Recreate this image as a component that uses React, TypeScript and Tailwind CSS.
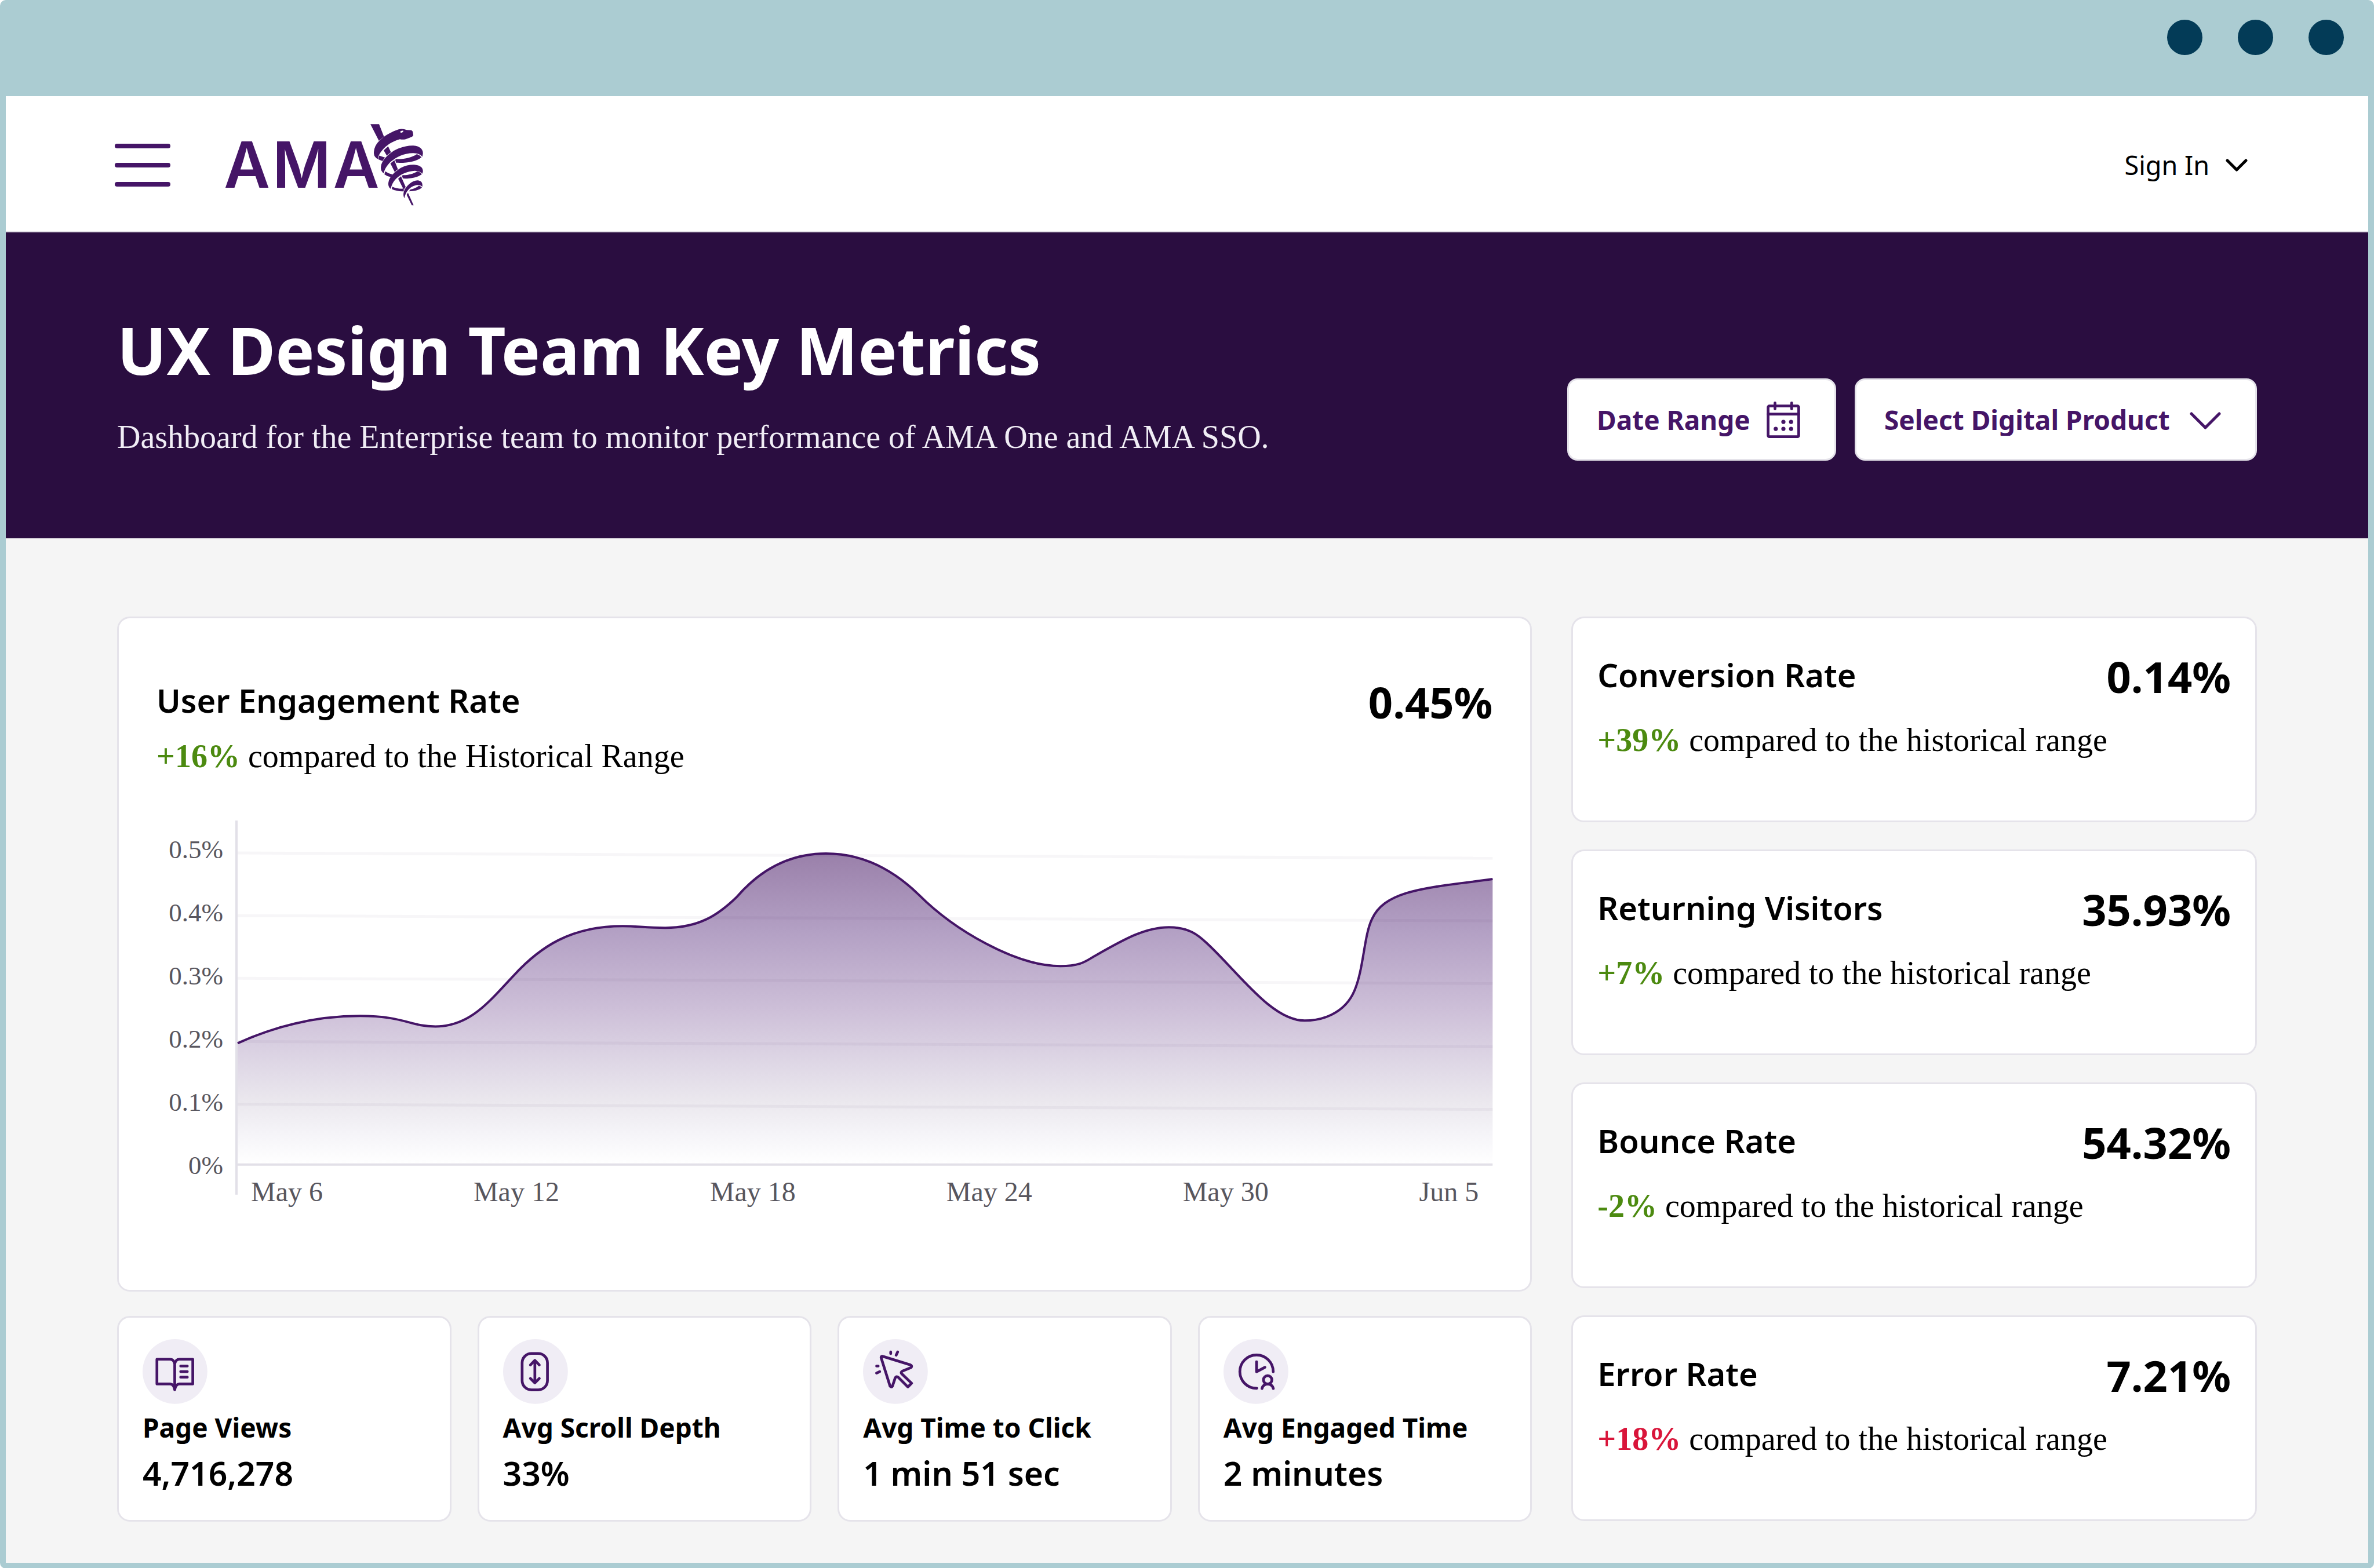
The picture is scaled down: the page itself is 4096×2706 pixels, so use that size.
import type { ReactNode } from 'react';

interface Comparison {
  title: string;
  value: string;
  change: string;
  rangeLabel: string;
  isBad?: boolean;
}

interface Stat {
  title: string;
  value: string;
  icon: ReactNode;
}

const engagement: Comparison = {
  title: 'User Engagement Rate',
  value: '0.45%',
  change: '+16%',
  rangeLabel: 'compared to the Historical Range',
};

const rates: Comparison[] = [
  { title: 'Conversion Rate', value: '0.14%', change: '+39%', rangeLabel: 'compared to the historical range' },
  { title: 'Returning Visitors', value: '35.93%', change: '+7%', rangeLabel: 'compared to the historical range' },
  { title: 'Bounce Rate', value: '54.32%', change: '-2%', rangeLabel: 'compared to the historical range' },
  { title: 'Error Rate', value: '7.21%', change: '+18%', rangeLabel: 'compared to the historical range', isBad: true },
];

const yTicks = ['0.5%', '0.4%', '0.3%', '0.2%', '0.1%', '0%'];
const xTicks = ['May 6', 'May 12', 'May 18', 'May 24', 'May 30', 'Jun 5'];
const gridLines = [56, 164, 272, 381, 489];

const curve =
  'M2 384 C70 353 143 337 213 337 C290 337 298 355 343 355 C404 355 437 310 478 267 C523 218 576 182 666 182 C690 182 706 185 739 185 C796 185 829 164 862 132 C894 95 943 57 1016 57 C1074 57 1127 80 1176 128 C1237 189 1343 251 1420 251 C1458 251 1465 241 1482 232 C1531 204 1567 184 1607 184 C1641 184 1657 197 1673 212 C1727 262 1784 345 1841 345 C1869 345 1910 334 1927 293 C1943 255 1943 199 1957 170 C1980 119 2053 116 2165 101';

function AmaLogo() {
  return (
    <svg viewBox="52 65 1416 576" className="h-[141px] w-[346px] overflow-visible" fill="#451567" role="img" aria-label="AMA">
      <text x="224 611 996" y="516" fontSize="448" fontWeight="600" textAnchor="middle" className="font-['Inter',sans-serif]">
        AMA
      </text>
      <g transform="scale(1 0.871)">
        {/* Staff */}
        <path d="M1096 75H1157L1192 177Q1172 192 1156 210Z" />
        <path d="M1190 288L1221 255L1241 303Q1225 315 1212 331Z" />
        <path d="M1237 394L1265 368L1290 442Q1275 450 1268 464Z" />
        <path d="M1292 518L1312 498L1345 585Q1337 595 1332 608Z" />
        <path d="M1352 648L1361 631L1401 733H1388Z" />
        {/* Coils behind the staff */}
        <path d="M1158 330L1200 346Q1187 360 1181 375L1150 360Q1154 343 1158 330Z" />
        <path d="M1278 358C1340 360 1390 345 1424 318Q1445 325 1457 344C1420 380 1350 392 1276 388Q1276 372 1270 365Z" />
        <path d="M1201 458Q1225 478 1254 484Q1246 493 1240 504Q1215 500 1195 483Q1196 470 1201 458Z" />
        <path d="M1325 489C1360 490 1400 478 1427 458Q1448 463 1460 480C1425 510 1375 518 1325 516Q1322 502 1318 495Z" />
        <path d="M1250 583C1275 597 1305 600 1328 598L1333 620C1300 622 1270 615 1247 602Z" />
        <path d="M1380 604C1400 600 1425 588 1438 574Q1452 578 1460 590C1440 612 1400 620 1367 620Z" />
        {/* Head and front coils */}
        <path d="M1148 357Q1122 345 1120 310C1122 240 1160 205 1200 170C1240 140 1280 122 1300 116Q1325 110 1352 122L1384 125Q1396 130 1397 150L1399 165Q1395 178 1375 184L1345 197Q1325 202 1304 197C1255 213 1215 240 1185 280C1162 308 1152 335 1148 357Z" />
        <path d="M1190 475C1172 460 1168 440 1170 420C1175 370 1215 325 1262 290C1310 260 1360 247 1400 249C1445 252 1468 280 1467 312L1463 340Q1445 312 1400 310C1340 308 1280 340 1240 380C1210 412 1195 445 1190 475Z" />
        <path d="M1240 600C1225 590 1221 570 1223 550C1228 500 1270 460 1310 430C1345 410 1380 402 1412 405C1450 410 1468 430 1467 458L1463 477Q1445 455 1410 453C1360 455 1310 480 1280 515C1255 545 1245 570 1240 600Z" />
        <path d="M1336 676C1326 655 1328 630 1338 605C1360 565 1390 535 1428 531C1455 533 1466 550 1463 583Q1450 568 1425 569C1390 575 1365 600 1350 630C1343 645 1338 660 1336 676Z" />
        <path fill="#fff" d="M1306 137L1312 131L1328 127L1327 138Q1318 148 1309 143Z" />
      </g>
    </svg>
  );
}

function CalendarIcon() {
  return (
    <svg viewBox="195 117 270 296" className="h-[63px] w-[58px]" fill="none" stroke="currentColor" strokeWidth="22" strokeLinecap="round" aria-hidden="true">
      <rect x="206" y="153" width="248" height="249" rx="10" />
      <path d="M206 219H454M262 128V177M397 128V177" />
      <g fill="currentColor" stroke="none">
        <circle cx="330" cy="282" r="17" />
        <circle cx="392" cy="282" r="17" />
        <circle cx="268" cy="338" r="17" />
        <circle cx="330" cy="338" r="17" />
        <circle cx="392" cy="338" r="17" />
      </g>
    </svg>
  );
}

/* Stat icons share one 525-unit disc */
function IconDisc({ children }: { children: ReactNode }) {
  return (
    <svg viewBox="0 0 525 525" className="size-[112px]" fill="none" stroke="#451567" strokeWidth="22" strokeLinecap="round" strokeLinejoin="round" aria-hidden="true">
      <circle cx="262" cy="262" r="262" fill="#f0edf5" stroke="none" />
      {children}
    </svg>
  );
}

const stats: Stat[] = [
  {
    title: 'Page Views',
    value: '4,716,278',
    icon: (
      <IconDisc>
        <path d="M260 200Q252 163 222 163H116V363H222Q254 365 260 410Q266 365 298 363H406V163H298Q268 163 260 200V410" />
        <path d="M308 218H362M308 263H362M308 308H362" />
      </IconDisc>
    ),
  },
  {
    title: 'Avg Scroll Depth',
    value: '33%',
    icon: (
      <IconDisc>
        <rect x="154" y="116" width="205" height="295" rx="76" />
        <path d="M257 174V352M221 209L257 172L293 209M221 318L257 354L293 318" />
      </IconDisc>
    ),
  },
  {
    title: 'Avg Time to Click',
    value: '1 min 51 sec',
    icon: (
      <IconDisc>
        <path d="M158 139L384 209Q400 217 388 230L322 257Q302 267 313 280L393 357L363 387L285 309Q271 298 261 312L238 381Q229 393 219 381L146 149Q146 137 158 139Z" />
        <path d="M224 104V117M280 104L268 130M110 218H123M110 275L135 263" />
      </IconDisc>
    ),
  },
  {
    title: 'Avg Engaged Time',
    value: '2 minutes',
    icon: (
      <IconDisc>
        <path d="M402 264A135 135 0 1 0 269 398" />
        <path d="M267 183V264L335 228" />
        <circle cx="357" cy="330" r="34" />
        <path d="M311 400Q321 364 357 364Q393 364 403 400" />
      </IconDisc>
    ),
  },
];

function CardHeader({ title, value }: { title: string; value: string }) {
  return (
    <div className="flex items-start justify-between">
      <h2 className="text-[56px] leading-[72px] font-semibold">{title}</h2>
      <span className="text-[74px] leading-[80px] font-bold">{value}</span>
    </div>
  );
}

function ChangeLine({ change, rangeLabel, isBad }: Comparison) {
  return (
    <p className="font-['Liberation_Serif',serif] text-[56px] leading-[72px]">
      <span className={isBad ? 'font-bold text-[#d9153a]' : 'font-bold text-[#4c8a10]'}>{change}</span> {rangeLabel}
    </p>
  );
}

function EngagementChart() {
  return (
    <div className="mt-[71px] flex items-start gap-[23px] font-['Liberation_Serif',serif] text-[#58565e]">
      <ul className="w-[115px] text-right text-[45px] leading-[109px]">
        {yTicks.map((tick) => (
          <li key={tick}>{tick}</li>
        ))}
      </ul>
      <div className="min-w-0 flex-1 pt-[4px]">
        <svg viewBox="0 0 2165 596" className="block w-full overflow-visible" fill="none" role="img" aria-label="User engagement rate, May 6 to Jun 5">
          <defs>
            <linearGradient id="engagement-fill" gradientUnits="userSpaceOnUse" x1="0" y1="57" x2="0" y2="593">
              <stop offset="0" stopColor="#9a80aa" />
              <stop offset="0.25" stopColor="#b3a0c4" />
              <stop offset="0.5" stopColor="#cdbfd8" />
              <stop offset="0.68" stopColor="#dfd8e6" />
              <stop offset="0.8" stopColor="#ebe8ee" />
              <stop offset="0.9" stopColor="#f5f4f8" />
              <stop offset="1" stopColor="#ffffff" />
            </linearGradient>
          </defs>
          <path d={`${curve} V593 H2 Z`} fill="url(#engagement-fill)" />
          {gridLines.map((y) => (
            <path key={y} d={`M2 ${y}L2165 ${y + 9}`} stroke="#2a0d40" strokeOpacity="0.04" strokeWidth="5" />
          ))}
          <path d="M0 593H2165M0 0V645" stroke="#e2e0e8" strokeWidth="4" />
          <path d={curve} stroke="#451567" strokeWidth="4" />
        </svg>
        <ul className="mt-[12px] flex justify-between pr-[24px] pl-[25px] text-[48px] leading-[64px]">
          {xTicks.map((tick) => (
            <li key={tick}>{tick}</li>
          ))}
        </ul>
      </div>
    </div>
  );
}

export default function App() {
  return (
    <div className="flex min-h-screen flex-col rounded-[10px] bg-[#abccd2] px-[10px] pb-[10px] font-['Noto_Sans',sans-serif] text-black">
      <div className="flex h-[166px] items-start justify-end gap-[61px] pt-[34px] pr-[42px]">
        <span className="size-[61px] rounded-full bg-[#033b57]" />
        <span className="size-[61px] rounded-full bg-[#033b57]" />
        <span className="size-[61px] rounded-full bg-[#033b57]" />
      </div>

      <header className="flex h-[235px] items-center justify-between border-b-2 border-[#e5e3ea] bg-white pt-[4px] pr-[208px] pl-[188px]">
        <div className="flex items-center gap-[90px]">
          <button type="button" aria-label="Menu" className="flex w-[96px] flex-col gap-[25px]">
            <span className="h-[8px] rounded-full bg-[#451567]" />
            <span className="h-[8px] rounded-full bg-[#451567]" />
            <span className="h-[8px] rounded-full bg-[#451567]" />
          </button>
          <AmaLogo />
        </div>
        <button type="button" className="flex items-center gap-[28px] text-[45px] leading-[56px]">
          Sign In
          <svg viewBox="0 0 38 22" className="h-[22px] w-[38px]" fill="none" stroke="currentColor" strokeWidth="5" strokeLinecap="round" strokeLinejoin="round" aria-hidden="true">
            <path d="M3 3L19 19L35 3" />
          </svg>
        </button>
      </header>

      <section className="flex items-end justify-between bg-[#2a0d40] px-[192px] py-[134px]">
        <div className="pb-[5px] text-white">
          <h1 className="text-[113px] leading-[136px] font-bold">UX Design Team Key Metrics</h1>
          <p className="mt-[47px] font-['Liberation_Serif',serif] text-[56px] leading-[72px] text-[#f0edf5]">
            Dashboard for the Enterprise team to monitor performance of AMA One and AMA SSO.
          </p>
        </div>
        <div className="flex gap-[32px] text-[46px] leading-[56px] font-bold text-[#451567]">
          <button type="button" className="flex h-[142px] w-[464px] items-center gap-[28px] rounded-[18px] border-[3px] border-[#e5e3ea] bg-white pl-[48px]">
            Date Range
            <CalendarIcon />
          </button>
          <div className="relative">
            <select aria-label="Select Digital Product" className="h-[142px] w-[694px] appearance-none rounded-[18px] border-[3px] border-[#e5e3ea] bg-white pr-[140px] pl-[48px]">
              <option>Select Digital Product</option>
            </select>
            <svg viewBox="0 0 54 30" className="pointer-events-none absolute top-[58px] right-[62px] h-[30px] w-[54px]" fill="none" stroke="currentColor" strokeWidth="5" strokeLinecap="round" strokeLinejoin="round" aria-hidden="true">
              <path d="M3 3L27 27L51 3" />
            </svg>
          </div>
        </div>
      </section>

      <main className="grid flex-1 grid-cols-[2440fr_1182fr] items-start gap-[68px] bg-[#f5f5f5] px-[192px] pt-[135px] pb-[71px]">
        <div className="flex flex-col gap-[42px]">
          <section className="rounded-[22px] border-[3px] border-[#e5e3ea] bg-white px-[65px] pt-[105px] pb-[137px]">
            <CardHeader title={engagement.title} value={engagement.value} />
            <div className="mt-[17px]">
              <ChangeLine {...engagement} />
            </div>
            <EngagementChart />
          </section>

          <div className="grid grid-cols-4 gap-[45px]">
            {stats.map((stat) => (
              <section key={stat.title} className="rounded-[22px] border-[3px] border-[#e5e3ea] bg-white px-[41px] pt-[37px] pb-[45px]">
                {stat.icon}
                <h3 className="mt-[12px] text-[46px] leading-[56px] font-bold">{stat.title}</h3>
                <p className="mt-[15px] text-[57px] leading-[72px] font-semibold">{stat.value}</p>
              </section>
            ))}
          </div>
        </div>

        <div className="flex flex-col gap-[47px]">
          {rates.map((rate) => (
            <section key={rate.title} className="rounded-[22px] border-[3px] border-[#e5e3ea] bg-white px-[42px] pt-[61px] pb-[103px]">
              <CardHeader title={rate.title} value={rate.value} />
              <div className="mt-[33px]">
                <ChangeLine {...rate} />
              </div>
            </section>
          ))}
        </div>
      </main>
    </div>
  );
}
